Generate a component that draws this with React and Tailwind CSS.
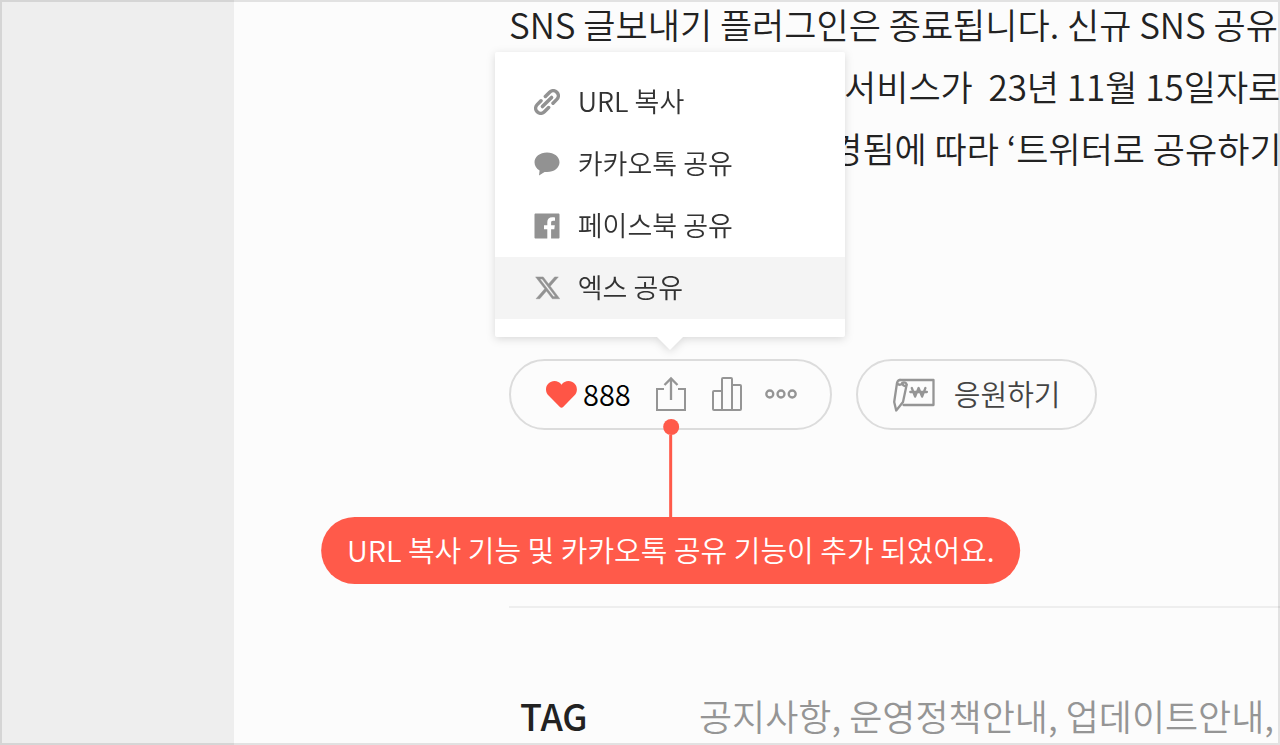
const paragraphs = [
  { text: "SNS 글보내기 플러그인은 종료됩니다. 신규 SNS 공유", indent: "pl-0" },
  { text: "서비스가\u00a0 23년 11월 15일자로", indent: "pl-[335px]" },
  { text: "변경됨에 따라 ‘트위터로 공유하기", indent: "pl-[289px]" },
];

const tags = ["공지사항", "운영정책안내", "업데이트안내"];

function LinkIcon() {
  return (
    <svg viewBox="-13 -13 26 26" className="size-[26px]" fill="none" stroke="currentColor" strokeWidth="3.5" strokeLinecap="round">
      <g transform="rotate(-45)">
        <path d="M2.8 -5.1H8.8a5.1 5.1 0 0 1 0 10.2H3.4" />
        <path d="M-3.4 -5.1H-8.8a5.1 5.1 0 0 0 0 10.2H-2.8" />
        <path d="M-6.5 0H6.5" />
      </g>
    </svg>
  );
}

function TalkIcon() {
  return (
    <svg viewBox="0 0 26 26" className="size-[26px]" fill="currentColor">
      <path d="M13 1.5C5.8 1.5.5 5.8.5 11.3c0 3.6 2 6.5 5.1 8.2L5 24.6l5.6-3.7c.8.1 1.6.2 2.4.2 7.2 0 12.5-4.3 12.5-9.8S20.2 1.500 13 1.500z" />
    </svg>
  );
}

function FacebookIcon() {
  return (
    <svg viewBox="0 0 26 26" className="size-[26px]" fill="currentColor">
      <path d="M1.6.5h22.800c.6 0 1.100.5 1.100 1.100v22.800c0 .6-.5 1.100-1.100 1.100h-7.300v-9.300h3.200l.5-3.900h-3.700V9.700c0-1.200.5-1.900 2-1.900h1.900V4.400c-.5-.1-1.500-.2-2.700-.2-3.100 0-5 1.800-5 5v3.100H10v3.900h3.300v9.300H1.600C1 25.500.5 25 .5 24.400V1.600C.5 1 1 .5 1.600.5z" />
    </svg>
  );
}

function XIcon() {
  return (
    <svg viewBox="0 0 26 26" className="size-[26px]" fill="currentColor" stroke="currentColor" strokeWidth="0.4">
      <path
        transform="translate(0.2 -0.6) scale(1.12)"
        d="M18.244 2.25h3.308l-7.227 8.26 8.502 11.24H16.17l-5.214-6.817L4.99 21.75H1.68l7.73-8.835L1.254 2.25H8.08l4.713 6.231zm-1.161 17.52h1.833L7.084 4.126H5.117z"
      />
    </svg>
  );
}

function HeartIcon() {
  return (
    <svg viewBox="0 0 32 28" className="h-7 w-8" fill="currentColor">
      <path d="M16.500 4.800C14.800 2.200 12.200 1 9.500 1 4.800 1 1 4.700 1 9.400c0 2.600 1 4.600 2.800 6.400l11.100 11.300c.9.900 2.300.9 3.200 0l11-11.300c1.800-1.800 2.800-3.800 2.800-6.400C31.900 4.700 28.200 1 23.500 1c-2.700 0-5.300 1.200-7 3.800z" />
    </svg>
  );
}

function ShareIcon() {
  return (
    <svg viewBox="0 0 32 36" className="h-9 w-8" fill="none" stroke="currentColor" strokeWidth="2">
      <path d="M9 13H2v21h28V13h-7" />
      <path d="M16 24V3M9.500 9 16 2.500 22.500 9" strokeWidth="2.3" />
    </svg>
  );
}

function StatsIcon() {
  return (
    <svg viewBox="0 0 32 36" className="h-9 w-8" fill="none" stroke="currentColor" strokeWidth="2" strokeLinejoin="round">
      <path d="M11 34H3c-.6 0-1-.4-1-1V16c0-.6.400-1 1-1h8" />
      <path d="M11 34V3c0-.6.4-1 1-1h8c.6 0 1 .4 1 1v31z" />
      <path d="M21 9h8c.6 0 1 .4 1 1v23c0 .6-.4 1-1 1h-8" />
    </svg>
  );
}

function MoreIcon() {
  return (
    <svg viewBox="0 0 32 10" className="h-[10px] w-8" fill="none" stroke="currentColor" strokeWidth="2.3">
      <circle cx="4.800" cy="5" r="3.500" />
      <circle cx="16" cy="5" r="3.500" />
      <circle cx="27.200" cy="5" r="3.500" />
    </svg>
  );
}

function CheerIcon() {
  return (
    <svg viewBox="0 0 44 36" className="h-9 w-11" fill="none" stroke="currentColor" strokeWidth="2.3" strokeLinejoin="round" strokeLinecap="round">
      <path d="M8 4H41.500v25H11.500" />
      <path d="M8 4C6 4 5.400 5.500 5 7L2.200 26l2 8.500L11 26l3.600-17C13.800 10.700 10.800 10 10.800 8" />
      <path d="M5.200 7.500c1.500 2 5 1.500 5-.7 2-.8 4-.2 4.500 1.700" />
      <path d="M19.800 12l3.300 8.600 3.500-8.600 3.500 8.600 3.300-8.600M18.300 16h16.600" />
    </svg>
  );
}

const shareItems = [
  { label: "URL 복사", icon: LinkIcon },
  { label: "카카오톡 공유", icon: TalkIcon },
  { label: "페이스북 공유", icon: FacebookIcon },
  { label: "엑스 공유", icon: XIcon, active: true },
];

function ShareMenu() {
  return (
    <div className="absolute bottom-full left-[15px] mb-[39px] w-[350px] -translate-x-1/2 drop-shadow-[0_2px_4px_rgba(0,0,0,0.14)]">
      <ul className="rounded-xs bg-white pt-[19px] pb-[18px]">
        {shareItems.map(({ label, icon: Icon, active }) => (
          <li key={label}>
            <button
              type="button"
              className={`flex h-[62px] w-full items-center gap-[18px] pl-[39px] text-[27px] text-[#333] ${
                active ? "bg-[#f4f4f4]" : ""
              }`}
            >
              <span className="text-[#929292]">
                <Icon />
              </span>
              {label}
            </button>
          </li>
        ))}
      </ul>
      <svg viewBox="0 0 26 13" className="absolute top-full left-1/2 h-[13px] w-[26px] -translate-x-1/2" fill="#fff">
        <path d="M0 0h26L13 13z" />
      </svg>
    </div>
  );
}

function Callout() {
  return (
    <div className="absolute top-full left-1/2 mt-[7px] flex -translate-x-1/2 flex-col items-center">
      <span className="size-4 rounded-full bg-[#ff5a4a]" />
      <span className="h-[82px] w-[3px] bg-[#ff5a4a]" />
      <p className="rounded-full bg-[#ff5a4a] px-[26px] pb-[3px] text-[29px] leading-[64px] whitespace-nowrap text-white">
        URL 복사 기능 및 카카오톡 공유 기능이 추가 되었어요.
      </p>
    </div>
  );
}

function PostActions() {
  return (
    <div className="mt-[180px] flex gap-6 pl-[275px]">
      <div className="flex h-[71px] items-center rounded-full border-2 border-[#dcdcdc] pr-[33px] pb-[2px] pl-[34px] text-[#959595]">
        <button type="button" className="flex items-center gap-[6px] text-[29px] text-black">
          <span className="text-[#ff5546]">
            <HeartIcon />
          </span>
          888
        </button>
        <div className="relative ml-6">
          <button type="button" aria-label="공유하기" className="block">
            <ShareIcon />
          </button>
          <ShareMenu />
          <Callout />
        </div>
        <button type="button" aria-label="통계" className="ml-6">
          <StatsIcon />
        </button>
        <button type="button" aria-label="더보기" className="ml-[22px]">
          <MoreIcon />
        </button>
      </div>
      <button
        type="button"
        className="flex h-[71px] items-center gap-[18px] rounded-full border-2 border-[#dcdcdc] px-[34px] pb-[2px] text-[29px] text-[#444]"
      >
        <span className="text-[#959595]">
          <CheerIcon />
        </span>
        응원하기
      </button>
    </div>
  );
}

export default function App() {
  return (
    <div className="relative flex min-h-screen overflow-hidden bg-[#fcfcfc] font-['Noto_Sans_CJK_KR',sans-serif] font-[350]">
      <aside className="w-[234px] shrink-0 bg-[#eee]" />
      <main className="min-w-0 flex-1 overflow-hidden">
        <article className="-mt-[7px] pl-[275px] text-[35px] leading-[62px] whitespace-nowrap text-[#222]">
          {paragraphs.map((p) => (
            <p key={p.text} className={p.indent}>
              {p.text}
            </p>
          ))}
        </article>
        <PostActions />
        <footer className="mt-44 ml-[275px] border-t-2 border-[#eee] pt-20">
          <dl className="flex text-4xl leading-[54px] whitespace-nowrap">
            <dt className="w-[190px] shrink-0 pl-[11px] font-medium text-[#222]">TAG</dt>
            <dd className="text-[#959595]">{tags.map((tag) => `${tag}, `)}</dd>
          </dl>
        </footer>
      </main>
      <div className="pointer-events-none absolute inset-0 border-2 border-black/10" />
    </div>
  );
}
